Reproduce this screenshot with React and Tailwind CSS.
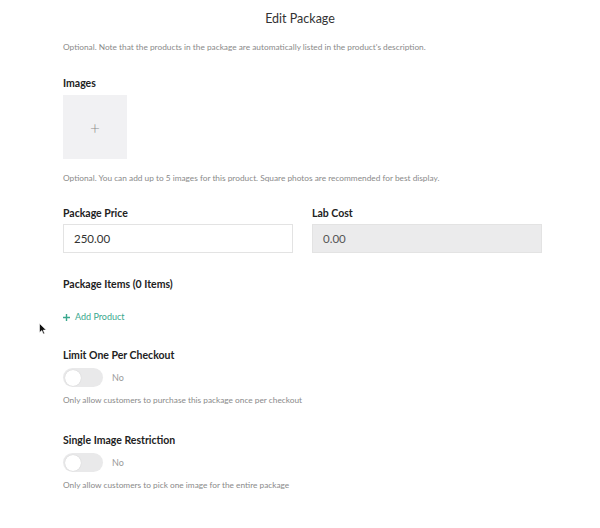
import React from "react";

function Toggle({ label }) {
  return (
    <div className="flex items-center gap-[9px] h-[19px]">
      <div className="w-[40px] h-[19px] rounded-full bg-[#e9e9ea] p-[1.5px] flex items-center">
        <div className="w-[16px] h-[16px] rounded-full bg-white shadow-[0_0_1px_rgba(0,0,0,0.2)]" />
      </div>
      <span className="text-[9px] leading-none text-[#9a9a9a]">{label}</span>
    </div>
  );
}

function Label({ children }) {
  return <div className="text-[10.5px] leading-[11px] font-bold text-[#222]">{children}</div>;
}

function Help({ children, className = "" }) {
  return <p className={`text-[8.3px] leading-[9px] text-[#8a8a8a] ${className}`}>{children}</p>;
}

export default function App() {
  return (
    <div
      className="w-[600px] h-[528px] bg-white overflow-hidden relative"
      style={{ fontFamily: "Lato, 'Open Sans', sans-serif" }}
    >
      <div className="pt-[12px] text-center text-[12.5px] leading-[14px] text-[#333]">Edit Package</div>

      <div className="pl-[63px] w-[542px]">
        <Help className="mt-[17px]">
          Optional. Note that the products in the package are automatically listed in the product's description.
        </Help>

        <div className="mt-[26px]">
          <Label>Images</Label>
          <div className="mt-[6px] w-[64px] h-[64px] bg-[#f1f1f3] flex items-center justify-center text-[#8c8c8c] text-[17px] leading-none font-light">
            +
          </div>
          <Help className="mt-[15px]">
            Optional. You can add up to 5 images for this product. Square photos are recommended for best display.
          </Help>
        </div>

        <div className="mt-[25px] grid grid-cols-2 gap-[19px]">
          <div>
            <Label>Package Price</Label>
            <div className="mt-[5px] h-[29px] border border-[#e3e3e3] flex items-center px-[10px] text-[11.5px] text-[#333]">
              250.00
            </div>
          </div>
          <div>
            <Label>Lab Cost</Label>
            <div className="mt-[5px] h-[29px] border border-[#e3e3e3] bg-[#ebebec] flex items-center px-[10px] text-[11.5px] text-[#555]">
              0.00
            </div>
          </div>
        </div>

        <div className="mt-[26px]">
          <Label>Package Items (0 Items)</Label>
          <div className="mt-[22px] flex items-center gap-[5px] text-[9px] leading-[10px] text-[#3aa88e]">
            <svg width="7" height="7" viewBox="0 0 7 7">
              <path d="M3.5 0 V7 M0 3.5 H7" stroke="#3aa88e" strokeWidth="1.4" />
            </svg>
            <span>Add Product</span>
          </div>
        </div>

        <div className="mt-[28px]">
          <Label>Limit One Per Checkout</Label>
          <div className="mt-[7px]">
            <Toggle label="No" />
          </div>
          <Help className="mt-[9px]">
            Only allow customers to purchase this package once per checkout
          </Help>
        </div>

        <div className="mt-[30px]">
          <Label>Single Image Restriction</Label>
          <div className="mt-[7px]">
            <Toggle label="No" />
          </div>
          <Help className="mt-[9px]">
            Only allow customers to pick one image for the entire package
          </Help>
        </div>
      </div>

      <svg className="absolute left-[39px] top-[323px]" width="8" height="12" viewBox="0 0 8 12">
        <path d="M0.5 0.5 L0.5 9.5 L2.8 7.6 L4.3 11 L5.6 10.4 L4.2 7.1 L7.2 7.1 Z" fill="#111" stroke="#fff" strokeWidth="0.6" />
      </svg>
    </div>
  );
}
